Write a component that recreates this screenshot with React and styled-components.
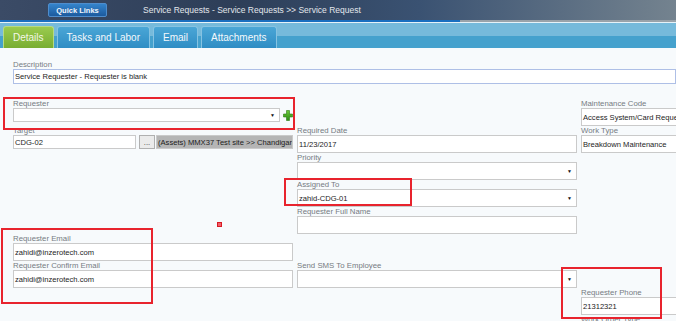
import styled, { createGlobalStyle } from 'styled-components';

const GlobalStyle = createGlobalStyle`
  html, body {
    margin: 0;
    padding: 0;
    overflow: hidden;
    background: #f7fafc;
    font-family: "Liberation Sans", Arial, sans-serif;
  }
`

const Page = styled.div`
  position: relative;
  width: 676px;
  height: 321px;
  overflow: hidden;
`

const TopBar = styled.header`
  height: 20px;
  display: flex;
  align-items: center;
  background: linear-gradient(90deg, #3b4b66 0%, #2d3e58 35%, #3a5272 62%, #74838f 100%);
`

const QuickLinks = styled.button`
  margin-left: 48px;
  width: 59px;
  height: 14px;
  padding: 0;
  border: 1px solid #4f8dcc;
  border-radius: 2px;
  background: linear-gradient(#3484cc, #1c5a9e);
  color: #f2f6fb;
  font-family: inherit;
  font-size: 7.5px;
  font-weight: bold;
`

const Title = styled.div`
  margin-left: 36px;
  color: #e2e6ec;
  font-size: 8.5px;
`

const Rule = styled.div`
  height: 2px;
  background: linear-gradient(90deg, #1a6fc0 0 460px, #9aa3aa 460px);
`

const TabBar = styled.nav`
  height: 26px;
  box-sizing: border-box;
  border-top: 1px solid #e6f2f8;
  padding: 3px 0 0 3px;
  display: flex;
  align-items: flex-end;
  gap: 3px;
  background: linear-gradient(#76badb 0 52%, #45a1cd 52%);
`

const Tab = styled.div`
  height: 22px;
  box-sizing: border-box;
  padding: 0 9px;
  display: flex;
  align-items: center;
  border: 1px solid ${p => (p.$active ? '#b6da84' : '#86c3e2')};
  border-bottom: none;
  border-radius: 3px 3px 0 0;
  background: ${p => (p.$active
    ? 'linear-gradient(#9acb4e, #78ad32)'
    : 'linear-gradient(#4aa6d6, #2f8dc4)')};
  color: ${p => (p.$active ? '#f4f8e8' : '#f4f9fc')};
  font-size: 10px;
`

const Content = styled.main`
  padding: 12px 0 0 13px;
`

const Label = styled.div`
  height: 9px;
  line-height: 9px;
  font-size: 7.8px;
  color: #767b82;
  white-space: nowrap;
`

const Box = styled.div`
  height: 14px;
  box-sizing: border-box;
  border: 1px solid ${p => (p.$blue ? '#aebfe6' : '#cacaca')};
  background: ${p => (p.$grey ? '#b5b5b5' : '#fff')};
  padding: 0 1px;
  display: flex;
  align-items: center;
  font-size: 7.6px;
  color: #1c1c1c;
  white-space: nowrap;
  overflow: hidden;
  flex: ${p => (p.$w ? `0 0 ${p.$w}px` : '1')};
`

const Arrow = styled.span`
  margin-left: auto;
  font-size: 5px;
  color: #111;
  padding-right: 3px;
`

const Description = styled.div`
  width: 663px;
  margin-bottom: 15px;
  ${Box} {
    height: 15px;
  }
`

const Form = styled.div`
  display: grid;
  grid-template-columns: 280px 280px 280px;
  grid-auto-rows: 27px;
  column-gap: 4px;
`

const Field = styled.div`
  grid-column: ${p => p.$col};
  grid-row: ${p => p.$row};
  display: flex;
  flex-direction: column;
`

const Line = styled.div`
  display: flex;
  align-items: center;
`

const Dots = styled.div`
  height: 14px;
  width: 16px;
  margin: 0 1px 0 3px;
  box-sizing: border-box;
  border: 1px solid #b0b0b0;
  background: #ebebeb;
  font-size: 7.5px;
  color: #333;
  display: flex;
  align-items: center;
  justify-content: center;
  flex: none;
`

const Mark = styled.div`
  position: absolute;
  left: ${p => p.$x}px;
  top: ${p => p.$y}px;
  width: ${p => p.$w}px;
  height: ${p => p.$h}px;
  box-sizing: border-box;
  border: 2px solid #e8232d;
  pointer-events: none;
`

const Dot = styled.div`
  position: absolute;
  left: 217px;
  top: 222px;
  width: 5px;
  height: 5px;
  box-sizing: border-box;
  border: 1px solid #d81a24;
  background: #f0606a;
`

const Plus = () => (
  <svg width="10" height="11" viewBox="0 0 10 11" style={{ marginLeft: 3, flex: 'none' }}>
    <defs>
      <linearGradient id="pg" x1="0" y1="0" x2="0" y2="1">
        <stop offset="0" stopColor="#6cc83a" />
        <stop offset="1" stopColor="#2c8c14" />
      </linearGradient>
    </defs>
    <path d="M3.5 0.5h3v3.5h3v3h-3v3.5h-3v-3.5h-3v-3h3z" fill="url(#pg)" stroke="#2a7a12" strokeWidth="0.6" />
  </svg>
)

export default function App() {
  return (
    <Page>
      <GlobalStyle />
      <TopBar>
        <QuickLinks>Quick Links</QuickLinks>
        <Title>Service Requests - Service Requests &gt;&gt; Service Request</Title>
      </TopBar>
      <Rule />
      <TabBar>
        <Tab $active>Details</Tab>
        <Tab>Tasks and Labor</Tab>
        <Tab>Email</Tab>
        <Tab>Attachments</Tab>
      </TabBar>
      <Content>
        <Description>
          <Label>Description</Label>
          <Box $blue>Service Requester - Requester is blank</Box>
        </Description>
        <Form>
          <Field $col={1} $row={1}>
            <Label>Requester</Label>
            <Line>
              <Box><Arrow>▼</Arrow></Box>
              <Plus />
            </Line>
          </Field>
          <Field $col={3} $row={1}>
            <Label>Maintenance Code</Label>
            <Box>Access System/Card Request</Box>
          </Field>

          <Field $col={1} $row={2}>
            <Label>Target</Label>
            <Line>
              <Box $w={123}>CDG-02</Box>
              <Dots>...</Dots>
              <Box $grey>(Assets) MMX37 Test site &gt;&gt; Chandigarh</Box>
            </Line>
          </Field>
          <Field $col={2} $row={2}>
            <Label>Required Date</Label>
            <Box>11/23/2017</Box>
          </Field>
          <Field $col={3} $row={2}>
            <Label>Work Type</Label>
            <Box>Breakdown Maintenance</Box>
          </Field>

          <Field $col={2} $row={3}>
            <Label>Priority</Label>
            <Box><Arrow>▼</Arrow></Box>
          </Field>
          <Field $col={2} $row={4}>
            <Label>Assigned To</Label>
            <Box>zahid-CDG-01<Arrow>▼</Arrow></Box>
          </Field>
          <Field $col={2} $row={5}>
            <Label>Requester Full Name</Label>
            <Box />
          </Field>

          <Field $col={1} $row={6}>
            <Label>Requester Email</Label>
            <Box>zahidi@inzerotech.com</Box>
          </Field>
          <Field $col={1} $row={7}>
            <Label>Requester Confirm Email</Label>
            <Box>zahidi@inzerotech.com</Box>
          </Field>
          <Field $col={2} $row={7}>
            <Label>Send SMS To Employee</Label>
            <Box><Arrow>▼</Arrow></Box>
          </Field>

          <Field $col={3} $row={8}>
            <Label>Requester Phone</Label>
            <Box>21312321</Box>
          </Field>
          <Field $col={3} $row={9}>
            <Label>Work Order Type</Label>
            <Box />
          </Field>
        </Form>
      </Content>

      <Mark $x={3} $y={97} $w={292} $h={33} />
      <Mark $x={284} $y={178} $w={128} $h={28} />
      <Mark $x={1} $y={228} $w={152} $h={76} />
      <Mark $x={561} $y={267} $w={101} $h={52} />
      <Dot />
    </Page>
  );
}
